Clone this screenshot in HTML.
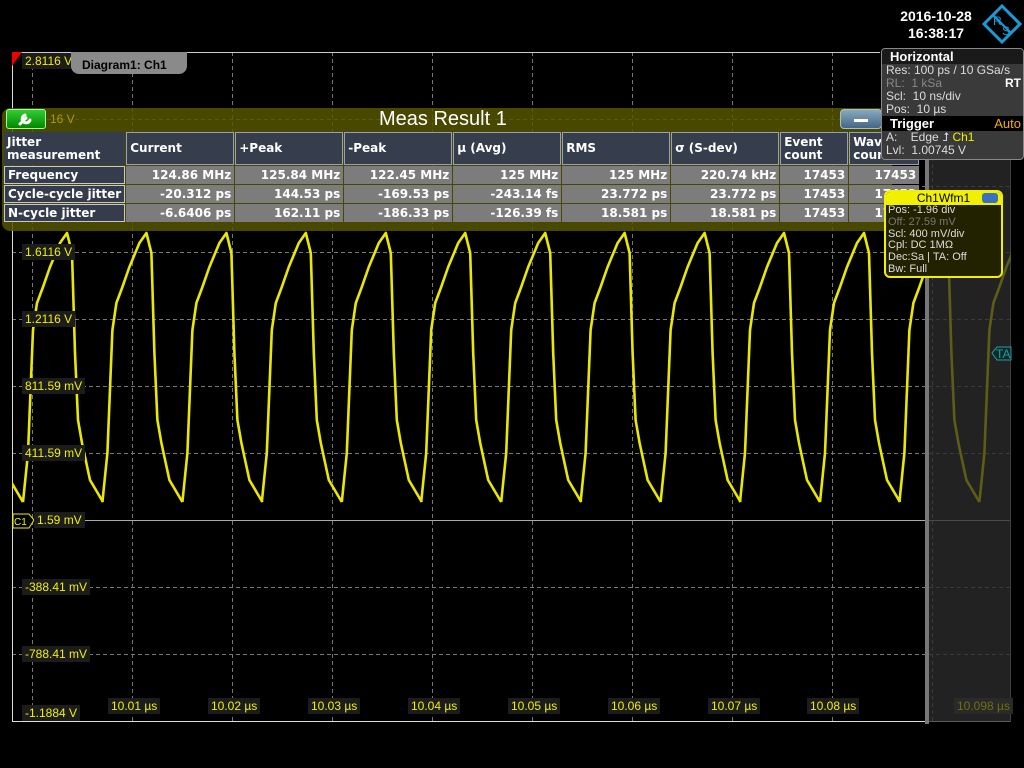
<!DOCTYPE html>
<html><head><meta charset="utf-8"><style>
*{margin:0;padding:0;box-sizing:border-box}
body{width:1024px;height:768px;background:#000;overflow:hidden;position:relative;font-family:"Liberation Sans","DejaVu Sans",sans-serif}
.a{position:absolute}
.lbl{position:absolute;background:#1c1c1c;color:#f0f000;font-size:12px;line-height:16px;padding:0 3px;white-space:nowrap}
table{border-collapse:separate;border-spacing:1px;font-family:"DejaVu Sans","Liberation Sans",sans-serif;font-weight:bold;font-size:12px;color:#fff}
td{padding:0 3px;white-space:nowrap}
.h{background:#363d4d;border:1px solid #9aa0b0;height:33px;line-height:13px;vertical-align:middle}
.r{background:#353c4c;border:1px solid #c8c8d0;height:18px}
.d{background:#7c7c7c;text-align:right;height:18px}
.p{font-family:"Liberation Sans",sans-serif;font-size:12px;line-height:13px;white-space:nowrap}
</style></head><body>
<svg class="a" style="left:0;top:0" width="1024" height="768">
<defs><clipPath id="c"><rect x="12" y="52" width="999" height="669"/></clipPath></defs>
<rect x="925" y="52" width="86" height="670" fill="#222"/>
<g stroke="#777" stroke-dasharray="4,3" stroke-width="1">
<line x1="32.5" y1="52" x2="32.5" y2="721"/><line x1="132.5" y1="52" x2="132.5" y2="721"/><line x1="232.5" y1="52" x2="232.5" y2="721"/><line x1="332.5" y1="52" x2="332.5" y2="721"/><line x1="432.5" y1="52" x2="432.5" y2="721"/><line x1="532.5" y1="52" x2="532.5" y2="721"/><line x1="632.5" y1="52" x2="632.5" y2="721"/><line x1="732.5" y1="52" x2="732.5" y2="721"/><line x1="832.5" y1="52" x2="832.5" y2="721"/><line x1="932.5" y1="52" x2="932.5" y2="721"/>
<line x1="12" y1="119.5" x2="1011" y2="119.5"/><line x1="12" y1="186.5" x2="1011" y2="186.5"/><line x1="12" y1="252.5" x2="1011" y2="252.5"/><line x1="12" y1="319.5" x2="1011" y2="319.5"/><line x1="12" y1="386.5" x2="1011" y2="386.5"/><line x1="12" y1="453.5" x2="1011" y2="453.5"/><line x1="12" y1="587.5" x2="1011" y2="587.5"/><line x1="12" y1="654.5" x2="1011" y2="654.5"/>
</g>
<line x1="12" y1="520.5" x2="1011" y2="520.5" stroke="#aaa"/>
<line x1="12" y1="52.5" x2="880" y2="52.5" stroke="#ccc"/>
<line x1="12.5" y1="52" x2="12.5" y2="722" stroke="#ddd"/>
<line x1="12" y1="721.5" x2="1011" y2="721.5" stroke="#ddd"/>
<line x1="1010.5" y1="52" x2="1010.5" y2="722" stroke="#888"/>
<defs><path id="w" d="M-57,502 l5,-49 l5,-123 l4,-27 l6,-16 l7,-20 l10,-24 l7,-10 l5,20 l3,100 l3,67 l4,23 l8,37 l13,22 M23,502 l5,-49 l5,-123 l4,-27 l6,-16 l7,-20 l10,-24 l7,-10 l5,20 l3,100 l3,67 l4,23 l8,37 l13,22"/></defs>
<g clip-path="url(#c)" fill="none" stroke="#e8e800" stroke-width="2.6" stroke-linejoin="round">
<use href="#w"/><use href="#w" x="159.4"/><use href="#w" x="318.8"/><use href="#w" x="478.2"/><use href="#w" x="637.6"/><use href="#w" x="797"/><use href="#w" x="956.4"/>
</g>
<rect x="925" y="52" width="86" height="670" fill="#222" opacity="0.7"/>
<rect x="925" y="52" width="4" height="672" fill="#777"/>
<path d="M12,52 L22,52 L12,66 Z" fill="#e00"/>
<path d="M992,353 L997,347 L1011,347 L1011,360 L997,360 Z" fill="#0d2a2a" stroke="#2a9a9a"/>
<text x="996" y="358" font-size="12" fill="#2a9a9a" font-family="Liberation Sans">TA</text>
<path d="M13,514 L29,514 L34,520 L29,528 L13,528 Z" fill="#000" stroke="#f0f000"/>
<text x="14" y="525" font-size="10" fill="#f0f000" font-family="Liberation Sans">C1</text>
</svg>

<div class="lbl" style="left:22px;top:53px">2.8116 V</div>
<div class="a" style="left:71px;top:52px;width:116px;height:22px;background:#8a8a8a;border-radius:0 0 8px 8px;font-size:12px;font-weight:bold;line-height:26px;padding-left:11px;color:#000">Diagram1: Ch1</div>

<div class="lbl" style="left:22px;top:244px">1.6116 V</div>
<div class="lbl" style="left:22px;top:311px">1.2116 V</div>
<div class="lbl" style="left:22px;top:378px">811.59 mV</div>
<div class="lbl" style="left:22px;top:445px">411.59 mV</div>
<div class="lbl" style="left:34px;top:512px">1.59 mV</div>
<div class="lbl" style="left:22px;top:579px">-388.41 mV</div>
<div class="lbl" style="left:22px;top:646px">-788.41 mV</div>
<div class="lbl" style="left:22px;top:705px">-1.1884 V</div>
<div class="lbl" style="left:108px;top:698px">10.01 µs</div>
<div class="lbl" style="left:208px;top:698px">10.02 µs</div>
<div class="lbl" style="left:308px;top:698px">10.03 µs</div>
<div class="lbl" style="left:408px;top:698px">10.04 µs</div>
<div class="lbl" style="left:508px;top:698px">10.05 µs</div>
<div class="lbl" style="left:608px;top:698px">10.06 µs</div>
<div class="lbl" style="left:708px;top:698px">10.07 µs</div>
<div class="lbl" style="left:807px;top:698px">10.08 µs</div>
<div class="lbl" style="left:954px;top:698px;color:#6e6e10;background:#2a2a2a">10.098 µs</div>

<div class="a" style="left:2px;top:108px;width:890px;height:123px;background:rgba(85,85,0,0.85);border-radius:8px"></div>
<div class="a" style="left:6px;top:109px;width:40px;height:20px;background:linear-gradient(#3c3,#080);border:1px solid #9f9;border-radius:3px"><svg width="38" height="18"><path d="M13,14 L19,8 M18,5 a4,4 0 1 0 5,5" stroke="#fff" stroke-width="3" fill="none" stroke-linecap="round"/></svg></div>
<div class="a" style="left:50px;top:112px;color:#aa9a00;font-size:12px">16 V</div>
<div class="a" style="left:379px;top:108px;color:#fff;font-size:20px;line-height:22px">Meas Result 1</div>
<div class="a" style="left:840px;top:109px;width:42px;height:20px;background:linear-gradient(#8ab,#468);border:1px solid #abc;border-radius:4px"><div style="margin:9px auto 0;width:14px;height:3px;background:#fff"></div></div>
<div class="a" style="left:3px;top:131px;width:918px;height:97px;overflow:hidden">
<table>
<tr><td style="width:117px;background:#353c4c;height:33px;line-height:13px">Jitter<br>measurement</td><td class="h" style="width:108px">Current</td><td class="h" style="width:108px">+Peak</td><td class="h" style="width:108px">-Peak</td><td class="h" style="width:108px">µ (Avg)</td><td class="h" style="width:108px">RMS</td><td class="h" style="width:108px">σ (S-dev)</td><td class="h" style="width:68px">Event<br>count</td><td class="h" style="width:70px">Wave<br>count</td></tr>
<tr><td class="r">Frequency</td><td class="d">124.86 MHz</td><td class="d">125.84 MHz</td><td class="d">122.45 MHz</td><td class="d">125 MHz</td><td class="d">125 MHz</td><td class="d">220.74 kHz</td><td class="d">17453</td><td class="d">17453</td></tr>
<tr><td class="r">Cycle-cycle jitter</td><td class="d">-20.312 ps</td><td class="d">144.53 ps</td><td class="d">-169.53 ps</td><td class="d">-243.14 fs</td><td class="d">23.772 ps</td><td class="d">23.772 ps</td><td class="d">17453</td><td class="d">17453</td></tr>
<tr><td class="r">N-cycle jitter</td><td class="d">-6.6406 ps</td><td class="d">162.11 ps</td><td class="d">-186.33 ps</td><td class="d">-126.39 fs</td><td class="d">18.581 ps</td><td class="d">18.581 ps</td><td class="d">17453</td><td class="d">17453</td></tr>
</table></div>

<div class="a" style="left:886px;top:8px;color:#fff;font-size:14px;line-height:17px;text-align:center;width:100px;font-weight:bold">2016-10-28<br>16:38:17</div>
<svg class="a" style="left:982px;top:4px" width="40" height="40"><path d="M20,2 L38,20 L20,38 L2,20 Z" fill="none" stroke="#1a9ad6" stroke-width="3"/><line x1="11" y1="11" x2="29" y2="29" stroke="#1a9ad6" stroke-width="2"/><text x="11" y="21" font-size="12" fill="#1a9ad6">R</text><text x="20" y="31" font-size="12" fill="#1a9ad6">S</text></svg>

<div class="a p" style="left:881px;top:48px;width:143px;height:112px;background:#3a3a3a;border:1px solid #888;border-radius:4px;color:#ddd;overflow:hidden">
<div style="background:#1a1a1a;color:#fff;font-weight:bold;font-size:13px;padding-left:8px;height:15px;line-height:15px">Horizontal</div>
<div style="padding-left:4px">Res: 100 ps / 10 GSa/s</div>
<div style="padding-left:4px;color:#888">RL:&nbsp; 1 kSa<span style="float:right;color:#fff;font-weight:bold;padding-right:2px">RT</span></div>
<div style="padding-left:4px">Scl:&nbsp; 10 ns/div</div>
<div style="padding-left:4px">Pos:&nbsp; 10 µs</div>
<div style="background:#000;color:#fff;font-weight:bold;font-size:13px;padding-left:8px;height:15px;line-height:15px">Trigger<span style="float:right;color:#f0b000;font-weight:normal;padding-right:2px">Auto</span></div>
<div style="padding-left:4px">A:&nbsp;&nbsp;&nbsp; Edge ⮥ <span style="color:#f0f000">Ch1</span></div>
<div style="padding-left:4px">Lvl:&nbsp; 1.00745 V</div>
</div>

<div class="a p" style="left:884px;top:190px;width:119px;height:88px;background:#222200;border:2px solid #f0f000;border-radius:6px;color:#ddd;font-size:11px;line-height:11.8px;overflow:hidden">
<div style="background:#f0f000;color:#000;text-align:center;height:13px;line-height:13px;font-size:12px">Ch1Wfm1</div>
<div style="position:absolute;right:3px;top:1px;width:16px;height:10px;background:#3a70c0;border-radius:3px"></div>
<div style="padding-left:2px">Pos: -1.96 div</div>
<div style="padding-left:2px;color:#777">Off: 27.59 mV</div>
<div style="padding-left:2px">Scl: 400 mV/div</div>
<div style="padding-left:2px">Cpl: DC 1MΩ</div>
<div style="padding-left:2px">Dec:Sa | TA: Off</div>
<div style="padding-left:2px">Bw: Full</div>
</div>
</body></html>
